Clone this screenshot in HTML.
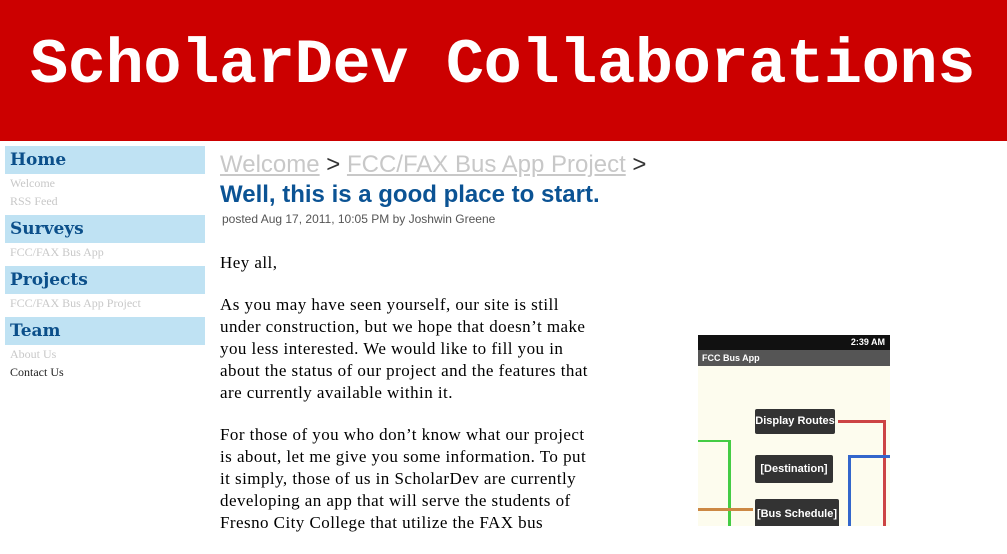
<!DOCTYPE html>
<html><head><meta charset="utf-8"><style>
body{margin:0;width:1007px;height:526px;overflow:hidden;background:#fff;position:relative;font-family:"Liberation Serif",serif}
.hdr{position:absolute;left:0;top:0;width:1007px;height:141px;background:#cc0000}
.hdr div{position:absolute;left:30px;top:35px;font:bold 63.5px/1 "Liberation Mono",monospace;color:#fff;letter-spacing:-0.3px;white-space:nowrap}
.nb{position:absolute;left:5px;width:200px;height:28px;background:#bfe2f3;color:#0b4f8a;font:bold 17px/28px "DejaVu Serif",serif;padding-left:5px;box-sizing:border-box}
.nl{position:absolute;left:10px;font-size:12px;color:#c8c8c8}
.bc{position:absolute;left:220px;top:151px;font:24px "Liberation Sans",sans-serif;color:#333;white-space:nowrap}
.bc u{color:#c8c8c8}
h1{position:absolute;left:220px;top:181px;margin:0;font:bold 24px "Liberation Sans",sans-serif;color:#0b5394;white-space:nowrap}
.post{position:absolute;left:222px;top:212px;font:12px "Liberation Sans",sans-serif;color:#555}
.txt{position:absolute;left:220px;top:252px;font-size:17px;letter-spacing:0.45px;line-height:22px;color:#000;white-space:nowrap}
.txt p{margin:0 0 20px}
.ph{position:absolute;left:698px;top:335px;width:192px;height:191px;background:#fdfcee;overflow:hidden}
</style></head><body>
<div class="hdr"><div>ScholarDev Collaborations</div></div>
<div class="nb" style="top:146px">Home</div>
<div class="nl" style="top:176px">Welcome</div>
<div class="nl" style="top:194px">RSS Feed</div>
<div class="nb" style="top:215px">Surveys</div>
<div class="nl" style="top:245px">FCC/FAX Bus App</div>
<div class="nb" style="top:266px">Projects</div>
<div class="nl" style="top:296px">FCC/FAX Bus App Project</div>
<div class="nb" style="top:317px">Team</div>
<div class="nl" style="top:347px">About Us</div>
<div class="nl" style="top:365px;color:#222">Contact Us</div>
<div class="bc"><u>Welcome</u> &gt; <u>FCC/FAX Bus App Project</u> &gt;</div>
<h1>Well, this is a good place to start.</h1>
<div class="post">posted Aug 17, 2011, 10:05 PM by Joshwin Greene</div>
<div class="txt"><p>Hey all,</p>
<p>As you may have seen yourself, our site is still<br>under construction, but we hope that doesn’t make<br>you less interested. We would like to fill you in<br>about the status of our project and the features that<br>are currently available within it.</p>
<p>For those of you who don’t know what our project<br>is about, let me give you some information. To put<br>it simply, those of us in ScholarDev are currently<br>developing an app that will serve the students of<br>Fresno City College that utilize the FAX bus</p></div>
<div class="ph">
<div style="position:absolute;left:0;top:0;width:192px;height:15px;background:#111;color:#fff;font:bold 9px/15px 'Liberation Sans',sans-serif;text-align:right;padding-right:5px;box-sizing:border-box">2:39 AM</div>
<div style="position:absolute;left:0;top:15px;width:192px;height:16px;background:#555;color:#fff;font:bold 9px/16px 'Liberation Sans',sans-serif;padding-left:4px">FCC Bus App</div>
<div style="position:absolute;left:0;top:105px;width:32px;height:3px;border-top:2px solid #4c4;"></div>
<div style="position:absolute;left:30px;top:105px;width:3px;height:90px;background:#4c4"></div>
<div style="position:absolute;left:140px;top:85px;width:45px;height:110px;border-top:3px solid #c44;border-right:3px solid #c44"></div>
<div style="position:absolute;left:150px;top:120px;width:42px;height:80px;border-top:3px solid #36c;border-left:3px solid #36c"></div>
<div style="position:absolute;left:0;top:173px;width:55px;height:3px;background:#c84"></div>
<div style="position:absolute;left:57px;top:74px;width:80px;height:25px;background:#333;color:#fff;font:bold 11px/25px 'Liberation Sans',sans-serif;text-align:center;border-radius:2px">Display Routes</div>
<div style="position:absolute;left:57px;top:120px;width:78px;height:28px;background:#333;color:#fff;font:bold 11px/28px 'Liberation Sans',sans-serif;text-align:center;border-radius:2px">[Destination]</div>
<div style="position:absolute;left:57px;top:164px;width:84px;height:30px;background:#333;color:#fff;font:bold 11px/30px 'Liberation Sans',sans-serif;text-align:center;border-radius:2px">[Bus Schedule]</div>
</div>
</body></html>
